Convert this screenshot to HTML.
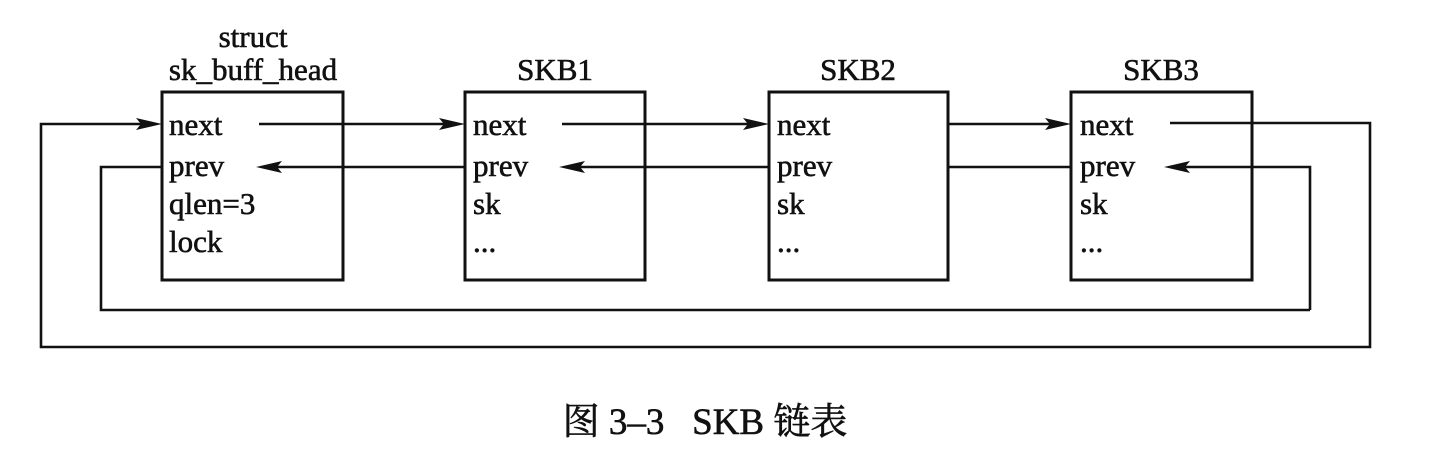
<!DOCTYPE html>
<html><head><meta charset="utf-8"><style>
html,body{margin:0;padding:0;background:#fff;}
svg{display:block}
text{font-family:"Liberation Serif","Noto Serif CJK SC",serif;fill:#111;stroke:#111;stroke-width:0.6;}
</style></head><body>
<svg width="1430" height="469" viewBox="0 0 1430 469" xmlns="http://www.w3.org/2000/svg">
<g stroke="#111" stroke-width="3" fill="none">
<rect x="162" y="92" width="181" height="188"/>
<rect x="465" y="92" width="180" height="188"/>
<rect x="769" y="92" width="179" height="188"/>
<rect x="1071" y="92" width="181" height="188"/>
</g>
<g stroke="#111" stroke-width="2.6" fill="none">
<line x1="259" y1="124" x2="450" y2="124"/>
<line x1="465" y1="167" x2="270" y2="167"/>
<line x1="562" y1="124" x2="755" y2="124"/>
<line x1="769" y1="167" x2="572" y2="167"/>
<line x1="948" y1="124" x2="1058" y2="124"/>
<line x1="1071" y1="167" x2="948" y2="167"/>
<polyline points="1170,123 1370,123 1370,347 41,347 41,124 150,124"/>
<polyline points="1310,310 1310,167 1178,167"/>
<polyline points="162,167 101,167 101,310 1310,310"/>
</g>
<g fill="#111">
<polygon points="465,124 439,118 444,124 439,130"/>
<polygon points="769,124 743,118 748,124 743,130"/>
<polygon points="1071,124 1045,118 1050,124 1045,130"/>
<polygon points="162,124 136,118 141,124 136,130"/>
<polygon points="256,167 282,161 277,167 282,173"/>
<polygon points="559,167 585,161 580,167 585,173"/>
<polygon points="1164,167 1190,161 1185,167 1190,173"/>
</g>
<g font-size="31">
<text x="253" y="47" text-anchor="middle">struct</text>
<text x="253" y="80" text-anchor="middle">sk_buff_head</text>
<text x="555" y="80" text-anchor="middle">SKB1</text>
<text x="858" y="80" text-anchor="middle">SKB2</text>
<text x="1161" y="80" text-anchor="middle">SKB3</text>
<text x="169" y="135">next</text>
<text x="169" y="176">prev</text>
<text x="169" y="214">qlen=3</text>
<text x="169" y="252">lock</text>
<text x="473" y="135">next</text>
<text x="473" y="176">prev</text>
<text x="473" y="214">sk</text>
<text x="473" y="252">...</text>
<text x="777" y="135">next</text>
<text x="777" y="176">prev</text>
<text x="777" y="214">sk</text>
<text x="777" y="252">...</text>
<text x="1080" y="135">next</text>
<text x="1080" y="176">prev</text>
<text x="1080" y="214">sk</text>
<text x="1080" y="252">...</text>
</g>
<text x="705" y="434" font-size="37" text-anchor="middle" xml:space="preserve">图 3–3   SKB 链表</text>
</svg>
</body></html>
